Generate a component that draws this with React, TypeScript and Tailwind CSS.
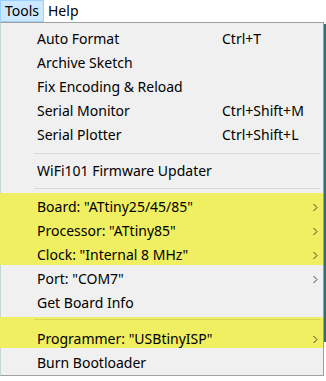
const Chevron = () => (
  <svg width="5" height="9" viewBox="0 0 5 9" className="shrink-0">
    <path d="M0.5 1 L4 4.5 L0.5 8" fill="none" stroke="#404040" strokeWidth="1" />
  </svg>
);

type ItemProps = { label: string; shortcut?: string; sub?: boolean };

function Item({ label, shortcut, sub }: ItemProps) {
  return (
    <div className="h-[24px] flex items-center pl-[36px] pr-[5px] text-black">
      <span className="w-[185px] shrink-0 whitespace-nowrap">{label}</span>
      {shortcut && <span className="whitespace-nowrap">{shortcut}</span>}
      {sub && (
        <span className="ml-auto flex items-center">
          <Chevron />
        </span>
      )}
    </div>
  );
}

const Separator = () => (
  <div className="h-[12px] flex items-center pl-[33px] pr-[3px]">
    <div className="h-px w-full bg-black/10" />
  </div>
);

export default function App() {
  return (
    <div className="w-[326px] h-[381px] bg-white overflow-hidden font-['Noto_Sans','Open_Sans',sans-serif] text-[14px] leading-none">
      {/* menu bar */}
      <div className="h-[22px] flex items-stretch">
        <div className="w-[44px] bg-[#cce8ff] border border-[#99d1ff] flex items-center pl-[4px]">Tools</div>
        <div className="flex items-center pl-[4px]">Help</div>
      </div>

      <div className="flex">
        {/* dropdown */}
        <div className="w-[324px] h-[354px] bg-[#f0f0f0] border border-[#a0a0a0] border-l-[#c4d6d8] pt-[4px]">
          <Item label="Auto Format" shortcut="Ctrl+T" />
          <Item label="Archive Sketch" />
          <Item label="Fix Encoding & Reload" />
          <Item label="Serial Monitor" shortcut="Ctrl+Shift+M" />
          <Item label="Serial Plotter" shortcut="Ctrl+Shift+L" />
          <Separator />
          <Item label="WiFi101 Firmware Updater" />
          <div className="h-[12px] flex flex-col">
            <div className="h-[10px] flex items-center pl-[33px] pr-[3px]">
              <div className="h-px w-full bg-black/10" />
            </div>
            <div className="h-[2px] bg-[#f0ef62] -ml-px" />
          </div>
          <div className="h-[70px] mb-[2px] bg-[#f0ef62] -ml-px pl-px">
            <Item label={'Board: "ATtiny25/45/85"'} sub />
            <Item label={'Processor: "ATtiny85"'} sub />
            <Item label={'Clock: "Internal 8 MHz"'} sub />
          </div>
          <Item label={'Port: "COM7"'} sub />
          <Item label="Get Board Info" />
          <div className="h-[12px] flex flex-col">
            <div className="h-[2px]" />
            <div className="h-[10px] bg-[#f0ef62] -ml-px pl-[34px] pr-[3px] pt-[2px]">
              <div className="h-px w-full bg-black/10" />
            </div>
          </div>
          <div className="h-[21px] mb-[3px] bg-[#f0ef62] -ml-px pl-px">
            <Item label={'Programmer: "USBtinyISP"'} sub />
          </div>
          <Item label="Burn Bootloader" />
        </div>

        {/* editor edge behind the menu */}
        <div className="w-[2px] pt-[2px]">
          <div className="h-[318px] bg-[#2f6f70]" />
        </div>
      </div>
    </div>
  );
}
